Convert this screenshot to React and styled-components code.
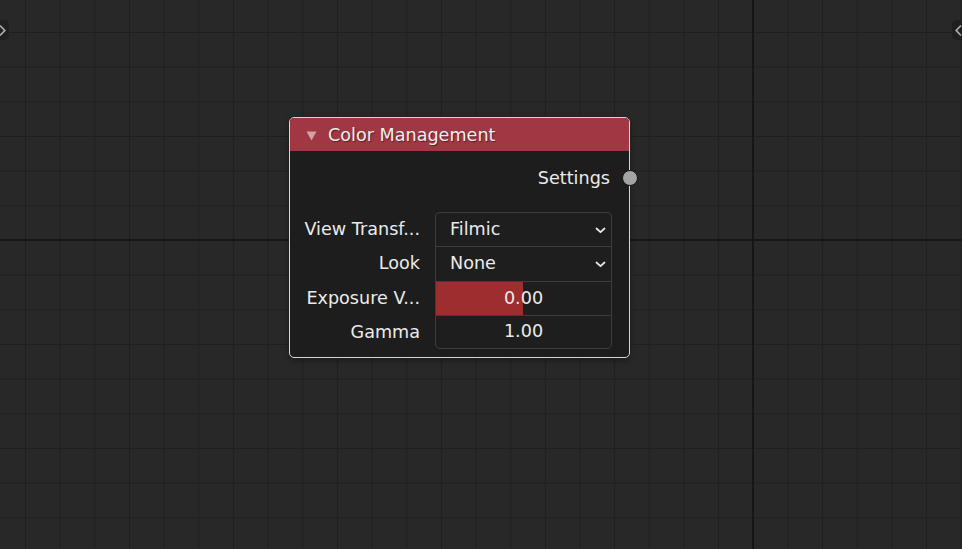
import React from "react";
import styled, { createGlobalStyle } from "styled-components";

const Global = createGlobalStyle`
  html, body {
    margin: 0;
    padding: 0;
    background: #282828;
  }
  * {
    box-sizing: border-box;
  }
`;

const fields = [
  { label: "View Transf...", kind: "menu", value: "Filmic" },
  { label: "Look", kind: "menu", value: "None" },
  { label: "Exposure V...", kind: "slider", value: "0.00", fill: 50 },
  { label: "Gamma", kind: "number", value: "1.00" },
];

const Chevron = () => (
  <svg width="11" height="7" viewBox="0 0 11 7">
    <path d="M1.5 1.5 L5.5 5.2 L9.5 1.5" fill="none" stroke="#e6e6e6" strokeWidth="1.8" strokeLinecap="round" strokeLinejoin="round" />
  </svg>
);

export default function App() {
  return (
    <Editor>
      <Global />
      <SideTab $side="left">
        <svg width="7" height="13" viewBox="0 0 7 13">
          <path d="M1 1.5 L5.8 6.5 L1 11.5" fill="none" stroke="#aaaaaa" strokeWidth="1.8" />
        </svg>
      </SideTab>
      <SideTab $side="right">
        <svg width="7" height="13" viewBox="0 0 7 13">
          <path d="M6 1.5 L1.2 6.5 L6 11.5" fill="none" stroke="#aaaaaa" strokeWidth="1.8" />
        </svg>
      </SideTab>

      <Node>
        <Header>
          <svg width="11" height="10" viewBox="0 0 11 10">
            <polygon points="0.5,0.5 10.5,0.5 5.5,9.5" fill="#d7a0a6" />
          </svg>
          <Title>Color Management</Title>
        </Header>
        <Body>
          <Output>
            Settings
            <Socket />
          </Output>
          <Fields>
            {fields.map((f, i) => (
              <React.Fragment key={f.label}>
                <Label>{f.label}</Label>
                <Field
                  $first={i === 0}
                  $last={i === fields.length - 1}
                  $menu={f.kind === "menu"}
                  style={f.fill != null ? { background: `linear-gradient(to right, #9d2d2f ${f.fill}%, #1e1e1e ${f.fill}%)` } : undefined}
                >
                  {f.value}
                  {f.kind === "menu" && (
                    <Arrow>
                      <Chevron />
                    </Arrow>
                  )}
                </Field>
              </React.Fragment>
            ))}
          </Fields>
        </Body>
      </Node>
    </Editor>
  );
}

const Editor = styled.div`
  position: relative;
  width: 100vw;
  height: 100vh;
  overflow: hidden;
  font-family: "DejaVu Sans", "Liberation Sans", sans-serif;
  font-size: 17.6px;
  color: #ebebeb;
  background-color: #282828;
  background-image:
    linear-gradient(to right, #161616 2px, transparent 2px),
    linear-gradient(to bottom, #161616 2px, transparent 2px),
    linear-gradient(to right, #1f1f1f 1px, transparent 1px),
    linear-gradient(to bottom, #1f1f1f 1px, transparent 1px);
  background-size: 2000px 2000px, 2000px 2000px, 34.667px 34.667px,
    34.667px 34.667px;
  background-position: 752px 239px, 752px 239px, 25px 32px, 25px 32px;
`;

const SideTab = styled.div`
  position: absolute;
  top: 20px;
  ${(p) => (p.$side === "left" ? "left: -7px;" : "right: -6px;")}
  width: 16px;
  height: 20px;
  border-radius: 5px;
  background: #1f1f1f;
  display: flex;
  align-items: center;
  justify-content: ${(p) => (p.$side === "left" ? "flex-end" : "flex-start")};
  ${(p) => (p.$side === "left" ? "padding-right: 3px;" : "padding-left: 3px;")}
`;

const Node = styled.div`
  position: absolute;
  left: 289px;
  top: 117px;
  width: 341px;
  height: 241px;
  border: 1px solid #d6d6d6;
  border-radius: 5px;
  background: #1d1d1d;
  box-shadow: 0 2px 6px rgba(0, 0, 0, 0.35);
`;

const Header = styled.div`
  height: 33px;
  background: #a13743;
  border-radius: 4px 4px 0 0;
  display: flex;
  align-items: center;
  gap: 11px;
  padding: 2px 0 0 16px;
`;

const Title = styled.span`
  color: #eeeeee;
  text-shadow: 1px 1px 1px rgba(0, 0, 0, 0.45);
  line-height: 1;
`;

const Body = styled.div`
  padding: 10px 17px 7px 8px;
`;

const Output = styled.div`
  position: relative;
  height: 34px;
  display: flex;
  align-items: center;
  justify-content: flex-end;
  padding-right: 2px;
  margin-bottom: 17px;
`;

const Socket = styled.span`
  position: absolute;
  display: block;
  right: -26px;
  top: 9px;
  width: 16px;
  height: 16px;
  border-radius: 50%;
  background: #a3a3a3;
  border: 1.5px solid #151515;
`;

const Fields = styled.div`
  display: grid;
  grid-template-columns: 1fr 177px;
  grid-auto-rows: 34.25px;
  column-gap: 15px;
`;

const Label = styled.div`
  display: flex;
  align-items: center;
  justify-content: flex-end;
  white-space: nowrap;
`;

const Field = styled.div`
  display: flex;
  align-items: center;
  justify-content: ${(p) => (p.$menu ? "flex-start" : "center")};
  padding: ${(p) => (p.$menu ? "0 5px 1px 14px" : "0 0 1px")};
  background: #1e1e1e;
  border: 1px solid #3d3d3d;
  border-bottom: ${(p) => (p.$last ? "1px solid #3d3d3d" : "none")};
  border-radius: ${(p) =>
    p.$first ? "5px 5px 0 0" : p.$last ? "0 0 5px 5px" : "0"};
`;

const Arrow = styled.span`
  margin-left: auto;
  display: flex;
  padding-top: 2px;
`;
